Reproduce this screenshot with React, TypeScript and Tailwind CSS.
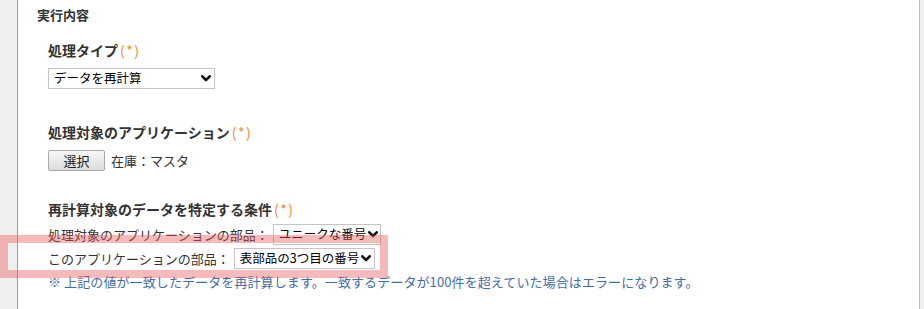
import React from 'react';

const font = { fontFamily: '"Noto Sans CJK JP", "Noto Sans", sans-serif' };

function Chevron() {
  return (
    <svg width="10" height="7" viewBox="0 0 10 7" className="shrink-0">
      <polyline points="1.3,1.3 5,5 8.7,1.3" fill="none" stroke="#111" strokeWidth="2.6" strokeLinecap="round" strokeLinejoin="round" />
    </svg>
  );
}

function FakeSelect({ label, width }: { label: string; width: string }) {
  return (
    <div className={`${width} shrink-0 h-[21px] flex items-center justify-between gap-[2px] pl-[5px] pr-[3px] border border-[#c4c4c4] bg-white text-[12.5px] text-black leading-none whitespace-nowrap overflow-hidden`}>
      <span className="whitespace-nowrap">{label}</span>
      <Chevron />
    </div>
  );
}

function Required() {
  return <span className="text-[#f58a2c] font-normal ml-[2px] tracking-[1.5px]">(*)</span>;
}

export default function App() {
  return (
    <div className="relative flex w-[924px] h-[309px] bg-white overflow-hidden" style={font}>
      <div className="w-[18px] shrink-0 bg-[#efefef] border-r border-[#9c9c9c]" />
      <div className="flex-1 bg-white border-r border-[#bdbdbd] pl-[19px] text-[#333]">
        <div className="pt-[5px] text-[13px] leading-[20px] font-bold text-[#333]">実行内容</div>

        <div className="pl-[11px]">
          <div className="mt-[15px] text-[14px] leading-[20px] font-bold">
            処理タイプ<Required />
          </div>
          <div className="mt-[8px]">
            <FakeSelect label="データを再計算" width="w-[167px]" />
          </div>

          <div className="mt-[33px] text-[14px] leading-[20px] font-bold">
            処理対象のアプリケーション<Required />
          </div>
          <div className="mt-[8px] flex items-center gap-[6px]">
            <button className="w-[57px] h-[21px] border border-[#a9a9a9] rounded-[2px] bg-gradient-to-b from-[#f7f7f7] to-[#dcdcdc] text-[13px] leading-none text-[#222]">
              選択
            </button>
            <span className="text-[13px] leading-[20px]">在庫：マスタ</span>
          </div>

          <div className="mt-[28px] text-[14px] leading-[20px] font-bold">
            再計算対象のデータを特定する条件<Required />
          </div>
          <div className="mt-[5px] flex items-center gap-[4px] text-[13px] whitespace-nowrap">
            <span>処理対象のアプリケーションの部品：</span>
            <FakeSelect label="ユニークな番号" width="w-[108px]" />
          </div>
          <div className="mt-[3px] flex items-center gap-[4px] text-[13px] whitespace-nowrap">
            <span>このアプリケーションの部品：</span>
            <FakeSelect label="表部品の3つ目の番号" width="w-[141px]" />
          </div>
          <div className="mt-[3px] text-[13px] leading-[20px] tracking-[0.1px] text-[#3f6ea8] whitespace-nowrap">
            ※ 上記の値が一致したデータを再計算します。一致するデータが100件を超えていた場合はエラーになります。
          </div>
        </div>
      </div>
      <div className="w-[4px] shrink-0 bg-[#f0f0f0]" />

      <div className="absolute left-0 top-[235px] w-[388px] h-[43px] border-[8px] border-[rgba(235,90,90,0.42)] pointer-events-none" />
    </div>
  );
}
